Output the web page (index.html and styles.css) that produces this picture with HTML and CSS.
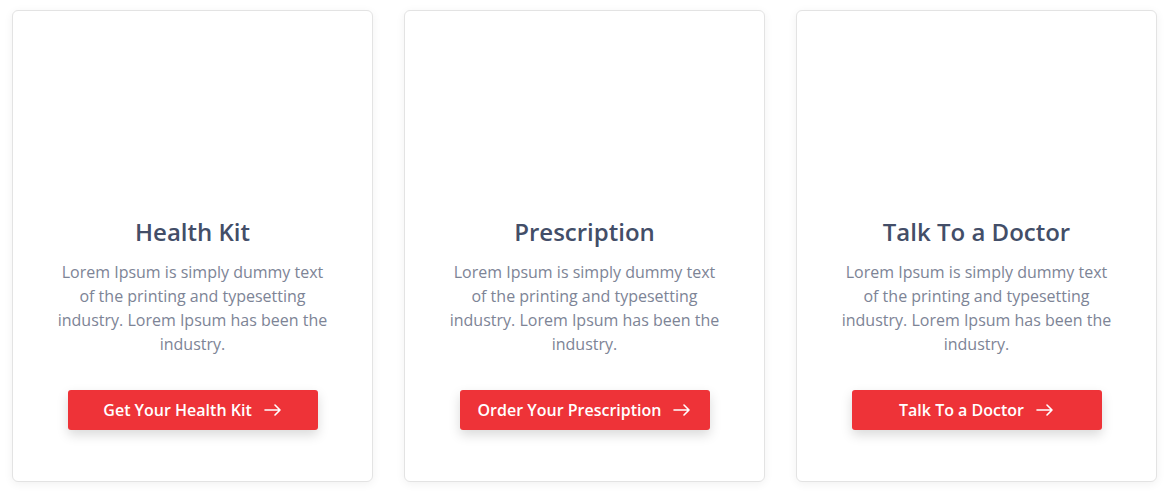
FILE: index.html
```html
<!DOCTYPE html>
<html>
<head>
<meta charset="utf-8">
<link rel="stylesheet" href="styles.css">
</head>
<body>
<div class="cards">
  <div class="card">
    <div class="media"></div>
    <h3 class="title">Health Kit</h3>
    <p class="text">Lorem Ipsum is simply dummy text<br>of the printing and typesetting<br>industry. Lorem Ipsum has been the<br>industry.</p>
    <a class="btn" href="#">Get Your Health Kit <svg width="18" height="12" viewBox="0 0 18 12"><path d="M1 6h15M11 1l5 5-5 5" fill="none" stroke="#fff" stroke-width="1.6" stroke-linecap="round" stroke-linejoin="round"/></svg></a>
  </div>
  <div class="card">
    <div class="media"></div>
    <h3 class="title">Prescription</h3>
    <p class="text">Lorem Ipsum is simply dummy text<br>of the printing and typesetting<br>industry. Lorem Ipsum has been the<br>industry.</p>
    <a class="btn" href="#">Order Your Prescription <svg width="18" height="12" viewBox="0 0 18 12"><path d="M1 6h15M11 1l5 5-5 5" fill="none" stroke="#fff" stroke-width="1.6" stroke-linecap="round" stroke-linejoin="round"/></svg></a>
  </div>
  <div class="card">
    <div class="media"></div>
    <h3 class="title">Talk To a Doctor</h3>
    <p class="text">Lorem Ipsum is simply dummy text<br>of the printing and typesetting<br>industry. Lorem Ipsum has been the<br>industry.</p>
    <a class="btn" href="#">Talk To a Doctor <svg width="18" height="12" viewBox="0 0 18 12"><path d="M1 6h15M11 1l5 5-5 5" fill="none" stroke="#fff" stroke-width="1.6" stroke-linecap="round" stroke-linejoin="round"/></svg></a>
  </div>
</div>
</body>
</html>
```
FILE: styles.css
```css
* { box-sizing: border-box; }
body {
  margin: 0;
  background: #fff;
  font-family: "Open Sans", "Noto Sans", sans-serif;
}
.cards {
  display: flex;
  gap: 31px;
  padding: 10px 12px;
}
.card {
  width: 361px;
  height: 472px;
  border: 1px solid #e3e3e3;
  border-radius: 6px;
  background: #fff;
  box-shadow: 0 2px 10px rgba(0,0,0,0.06);
  display: flex;
  flex-direction: column;
  align-items: center;
}
.media {
  height: 205px;
  width: 100%;
}
.title {
  margin: 0;
  font-size: 24px;
  line-height: 32px;
  font-weight: 600;
  color: #434e68;
}
.text {
  margin: 12px 0 0;
  width: 310px;
  text-align: center;
  font-size: 16px;
  line-height: 24px;
  color: #7d8496;
  white-space: nowrap;
}
.btn {
  margin-top: 34px;
  width: 250px;
  height: 40px;
  background: #ee3338;
  border-radius: 3px;
  color: #fff;
  text-decoration: none;
  font-size: 16px;
  font-weight: 600;
  display: flex;
  align-items: center;
  justify-content: center;
  gap: 12px;
  box-shadow: 0 5px 12px rgba(0,0,0,0.15);
}
```
